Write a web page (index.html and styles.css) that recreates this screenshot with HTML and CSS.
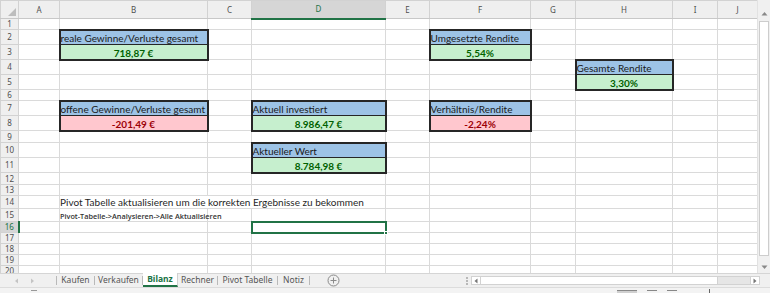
FILE: index.html
```html
<!DOCTYPE html>
<html lang="de">
<head>
<meta charset="utf-8">
<title>Bilanz</title>
<link rel="stylesheet" href="styles.css">
</head>
<body>
<div class="app">
  <div class="main">
    <div class="sheet">
      <table class="grid">
        <colgroup>
          <col class="c-rh"><col class="c-a"><col class="c-b"><col class="c-c"><col class="c-d"><col class="c-e"><col class="c-f"><col class="c-g"><col class="c-h"><col class="c-i"><col class="c-j">
        </colgroup>
        <tr class="hdr"><th class="corner"><span class="tri"></span></th><th>A</th><th>B</th><th>C</th><th class="sel-col">D</th><th>E</th><th>F</th><th>G</th><th>H</th><th>I</th><th>J</th></tr>
        <tr class="h11"><th>1</th><td></td><td></td><td></td><td></td><td></td><td></td><td></td><td></td><td></td><td></td></tr>
        <tr class="h15"><th>2</th><td></td><td class="bx-top">reale Gewinne/Verluste gesamt</td><td></td><td></td><td></td><td class="bx-top">Umgesetzte Rendite</td><td></td><td></td><td></td><td></td></tr>
        <tr class="h15"><th>3</th><td></td><td class="bx-val good">718,87 €</td><td></td><td></td><td></td><td class="bx-val good">5,54%</td><td></td><td></td><td></td><td></td></tr>
        <tr class="h15"><th>4</th><td></td><td></td><td></td><td></td><td></td><td></td><td></td><td class="bx-top">Gesamte Rendite</td><td></td><td></td></tr>
        <tr class="h15"><th>5</th><td></td><td></td><td></td><td></td><td></td><td></td><td></td><td class="bx-val good">3,30%</td><td></td><td></td></tr>
        <tr class="h11"><th>6</th><td></td><td></td><td></td><td></td><td></td><td></td><td></td><td></td><td></td><td></td></tr>
        <tr class="h15"><th>7</th><td></td><td class="bx-top">offene Gewinne/Verluste gesamt</td><td></td><td class="bx-top">Aktuell investiert</td><td></td><td class="bx-top">Verhältnis/Rendite</td><td></td><td></td><td></td><td></td></tr>
        <tr class="h15"><th>8</th><td></td><td class="bx-val bad">-201,49 €</td><td></td><td class="bx-val good">8.986,47 €</td><td></td><td class="bx-val bad">-2,24%</td><td></td><td></td><td></td><td></td></tr>
        <tr class="h12"><th>9</th><td></td><td></td><td></td><td></td><td></td><td></td><td></td><td></td><td></td><td></td></tr>
        <tr class="h15"><th>10</th><td></td><td></td><td></td><td class="bx-top">Aktueller Wert</td><td></td><td></td><td></td><td></td><td></td><td></td></tr>
        <tr class="h15"><th>11</th><td></td><td></td><td></td><td class="bx-val good">8.784,98 €</td><td></td><td></td><td></td><td></td><td></td><td></td></tr>
        <tr class="h12"><th>12</th><td></td><td></td><td></td><td></td><td></td><td></td><td></td><td></td><td></td><td></td></tr>
        <tr class="h11"><th>13</th><td></td><td></td><td></td><td></td><td></td><td></td><td></td><td></td><td></td><td></td></tr>
        <tr class="h13"><th>14</th><td></td><td class="note flow"><span class="over">Pivot Tabelle aktualisieren um die korrekten Ergebnisse zu bekommen</span></td><td class="flow"></td><td></td><td></td><td></td><td></td><td></td><td></td><td></td></tr>
        <tr class="h13"><th>15</th><td></td><td class="hint">Pivot-Tabelle-&gt;Analysieren-&gt;Alle Aktualisieren</td><td></td><td></td><td></td><td></td><td></td><td></td><td></td><td></td></tr>
        <tr class="h11"><th class="sel-row">16</th><td></td><td></td><td></td><td class="active"><span class="handle"></span></td><td></td><td></td><td></td><td></td><td></td><td></td></tr>
        <tr class="h11"><th>17</th><td></td><td></td><td></td><td></td><td></td><td></td><td></td><td></td><td></td><td></td></tr>
        <tr class="h11"><th>18</th><td></td><td></td><td></td><td></td><td></td><td></td><td></td><td></td><td></td><td></td></tr>
        <tr class="h11"><th>19</th><td></td><td></td><td></td><td></td><td></td><td></td><td></td><td></td><td></td><td></td></tr>
        <tr class="h11"><th class="last">20</th><td></td><td></td><td></td><td></td><td></td><td></td><td></td><td></td><td></td><td></td></tr>
      </table>
    </div>
    <div class="vscroll">
      <div class="vs-arrow up"><svg width="7" height="5" viewBox="0 0 7 5"><path d="M0.5 4.5 L3.5 1 L6.5 4.5 Z" fill="#888"/></svg></div>
      <div class="vs-thumb"></div>
      <div class="vs-arrow down"><svg width="7" height="5" viewBox="0 0 7 5"><path d="M0.5 0.5 L3.5 4 L6.5 0.5 Z" fill="#888"/></svg></div>
    </div>
  </div>
  <div class="tabbar">
    <div class="nav">
      <svg width="5" height="6" viewBox="0 0 5 6"><path d="M4 0.5 L1 3 L4 5.5 Z" fill="#c4c4c4"/></svg>
      <svg width="5" height="6" viewBox="0 0 5 6"><path d="M1 0.5 L4 3 L1 5.5 Z" fill="#c4c4c4"/></svg>
    </div>
    <div class="tab w-kaufen">Kaufen</div>
    <div class="tab w-verkaufen">Verkaufen</div>
    <div class="tab active-tab w-bilanz">Bilanz</div>
    <div class="tab w-rechner">Rechner</div>
    <div class="tab w-pivot">Pivot Tabelle</div>
    <div class="tab w-notiz">Notiz</div>
    <div class="add"><svg width="13" height="13" viewBox="0 0 13 13"><circle cx="6.5" cy="6.5" r="5.5" fill="none" stroke="#8a8a8a" stroke-width="1"/><path d="M6.5 3.5 V9.5 M3.5 6.5 H9.5" stroke="#8a8a8a" stroke-width="1"/></svg></div>
    <div class="spacer"></div>
    <div class="splitter"><i></i><i></i><i></i></div>
    <div class="hscroll">
      <div class="hs-arrow"><svg width="4" height="6" viewBox="0 0 4 6"><path d="M3.5 0.5 L0.5 3 L3.5 5.5 Z" fill="#777"/></svg></div>
      <div class="hs-thumb"></div>
      <div class="hs-track"></div>
      <div class="hs-arrow right"><svg width="4" height="6" viewBox="0 0 4 6"><path d="M0.5 0.5 L3.5 3 L0.5 5.5 Z" fill="#777"/></svg></div>
    </div>
  </div>
  <div class="status">
    <div class="st-left"><span class="st-ic"></span></div>
    <div class="st-views">
      <span class="view on"></span><span class="view"></span><span class="view"></span><span class="zoomtick"></span>
    </div>
  </div>
</div>
</body>
</html>
```
FILE: styles.css
```css
* { box-sizing: border-box; }
html, body { margin: 0; padding: 0; background: #fff; }
body { width: 770px; height: 293px; overflow: hidden; font-family: Lato, "Liberation Sans", sans-serif; }

.app { display: flex; flex-direction: column; width: 770px; height: 293px; }
.main { display: flex; height: 274px; overflow: hidden; }
.sheet { width: 757px; overflow: hidden; }

.grid { border-collapse: collapse; table-layout: fixed; width: 757px; }
.c-rh { width: 18px; } .c-a { width: 41px; } .c-b { width: 148px; } .c-c { width: 44px; }
.c-d { width: 134px; } .c-e { width: 44px; } .c-f { width: 101px; } .c-g { width: 45px; }
.c-h { width: 97px; } .c-i { width: 45px; } .c-j { width: 40px; }

.grid td, .grid th { padding: 0; border: 1px solid #dadada; white-space: nowrap; overflow: visible; }
.grid th {
  background: #efefef; border-color: #d2d2d2; color: #505050;
  font-family: "Noto Sans", "Open Sans", sans-serif; font-weight: normal; font-size: 8px; line-height: 1;
}
.grid tr > th:first-child { text-align: center; vertical-align: middle; }
.grid tr > th.last { vertical-align: top; padding-top: 1px; }
.hdr { height: 18px; }
.hdr th { vertical-align: middle; text-align: center; border-bottom-color: #c8c8c8; }
.corner { position: relative; }
.tri { position: absolute; right: 2px; bottom: 2px; width: 0; height: 0; border-left: 8px solid transparent; border-bottom: 8px solid #bdbdbd; }
.hdr .sel-col { background: #d6d6d6; border-bottom: 2px solid #217346; color: #217346; }
.grid th.sel-row { background: #d6d6d6; border-right: 2px solid #217346; color: #217346; }

.h11 { height: 11px; } .h12 { height: 12px; } .h13 { height: 13px; } .h15 { height: 15px; }

.bx-top, .bx-val { font-size: 10px; line-height: 12px; vertical-align: bottom; color: #1a1a1a; }
.bx-top {
  background: #9dc3e6; padding: 0 2px 0 2px;
  border-top: 2px solid #262626 !important; border-left: 2px solid #262626 !important; border-right: 2px solid #262626 !important;
  border-bottom: 1px solid #262626 !important;
}
.bx-val {
  text-align: center; font-weight: bold; padding-bottom: 1px;
  border-bottom: 2px solid #262626 !important; border-left: 2px solid #262626 !important; border-right: 2px solid #262626 !important;
  border-top: 1px solid #262626 !important;
}
.good { background: #c6efce; color: #006100; }
.bad { background: #ffc7ce; color: #9c0006; }

.note { font-size: 10px; color: #1f1f1f; vertical-align: bottom; padding-left: 2px; line-height: 12px; position: relative; }
.note .over { position: relative; z-index: 1; }
.grid td.flow { border-right-color: #fff; }
.hint { font-family: "Open Sans", "Noto Sans", sans-serif; font-size: 7.3px; font-weight: 600; color: #333; vertical-align: bottom; padding-left: 2px; padding-bottom: 1px; line-height: 9px; }

.grid td.active { border: 2px solid #217346; position: relative; }
.handle { position: absolute; right: -3px; bottom: -3px; width: 4px; height: 4px; background: #217346; border: 1px solid #fff; }

.vscroll { width: 13px; background: #f0f0f0; border-left: 1px solid #e2e2e2; display: flex; flex-direction: column; align-items: center; padding-top: 8px; }
.vs-arrow { width: 11px; height: 11px; display: flex; align-items: center; justify-content: center; }
.vs-thumb { width: 10px; height: 236px; background: #fff; border: 1px solid #cdcdcd; margin: 2px 0 6px; }

.tabbar { height: 14px; background: #f0f0f0; border-top: 1px solid #d5d5d5; display: flex; align-items: stretch; font-family: "Noto Sans", "Open Sans", sans-serif; font-size: 8.5px; color: #555; }
.nav { width: 57px; display: flex; align-items: center; gap: 11px; padding-left: 14px; border-right: 1px solid #b9b9b9; margin: 2px 0; }
.tab { display: flex; align-items: center; justify-content: center; border-right: 1px solid #b9b9b9; margin: 2px 0; line-height: 1; }
.w-kaufen { width: 38px; } .w-verkaufen { width: 48px; } .w-bilanz { width: 35px; } .w-rechner { width: 40px; }
.w-pivot { width: 60px; } .w-notiz { width: 32px; }
.active-tab { background: #fff; color: #217346; font-weight: bold; margin: -1px 0 0; border-bottom: 2px solid #217346; border-right: 1px solid #d0d0d0; padding-top: 1px; }
.add { width: 46px; display: flex; align-items: center; justify-content: center; padding-left: 0; }
.spacer { flex: 1; }
.splitter { width: 9px; display: flex; flex-direction: column; justify-content: center; align-items: center; gap: 1px; }
.splitter i { display: block; width: 2px; height: 2px; background: #b8b8b8; }
.hscroll { width: 289px; margin: 2px 10px 2px 0; display: flex; background: #e6e6e6; border: 1px solid #d2d2d2; }
.hs-arrow { width: 8px; display: flex; align-items: center; justify-content: center; background: #fff; }
.hs-thumb { width: 238px; background: #fff; border-left: 1px solid #d2d2d2; border-right: 1px solid #d2d2d2; }
.hs-track { flex: 1; }
.hs-arrow.right { width: 9px; border-left: 1px solid #d2d2d2; }

.status { flex: 1; background: #f3f3f3; border-top: 1px solid #dcdcdc; display: flex; justify-content: space-between; }
.st-left { padding-left: 31px; }
.st-ic { display: block; width: 6px; height: 3px; border-top: 1px solid #999; margin-top: 2px; }
.st-views { display: flex; gap: 10px; padding-right: 60px; align-items: flex-start; }
.view { display: block; width: 10px; height: 3px; border-top: 1px solid #888; margin-top: 2px; }
.view.on { background: #d0d0d0; width: 20px; }
.zoomtick { display: block; width: 1px; height: 4px; background: #666; margin-left: 22px; margin-top: 1px; }
```
